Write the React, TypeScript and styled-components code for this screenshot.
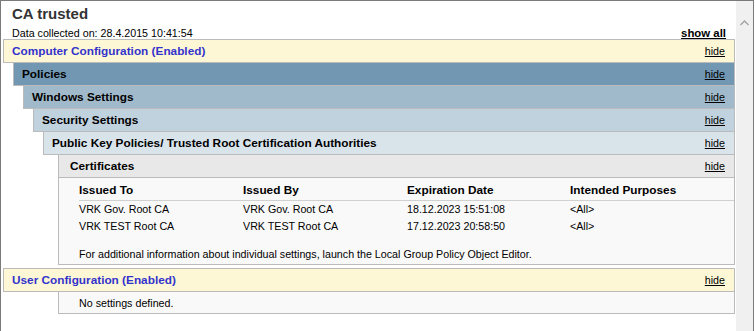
import styled, { createGlobalStyle } from 'styled-components';

const GlobalStyle = createGlobalStyle`
  html, body {
    margin: 0;
    padding: 0;
    background: #ffffff;
    overflow: hidden;
  }
  body {
    font-family: 'Liberation Sans', Arial, sans-serif;
    font-size: 10.7px;
    color: #000000;
  }
`;

const levelColors = ['#fef7d6', '#7197b3', '#a0bacb', '#c0d2de', '#d9e3ea', '#e8e8e8'];
const levelIndent = [2, 12, 22, 32, 42, 57];

const Frame = styled.div`
  display: flex;
  width: 754px;
  height: 340px;
  box-sizing: border-box;
  border: 1px solid #7a7a7a;
  border-bottom: none;
`;

const Content = styled.div`
  flex: 1;
  display: flex;
  flex-direction: column;
  min-width: 0;
`;

const TitleBlock = styled.div`
  padding: 3px 9px 0 11px;
  height: 38px;
  box-sizing: border-box;
`;

const Title = styled.div`
  font-size: 15px;
  font-weight: bold;
  line-height: 20px;
  color: #333333;
`;

const MetaRow = styled.div`
  display: flex;
  justify-content: space-between;
  line-height: 14px;
  margin-top: 2px;
`;

const ShowAll = styled.span`
  font-weight: bold;
  font-size: 11.4px;
  text-decoration: underline;
`;

const Header = styled.div<{ $level: number }>`
  display: flex;
  justify-content: space-between;
  align-items: center;
  height: 24px;
  box-sizing: border-box;
  margin-left: ${(p) => levelIndent[p.$level]}px;
  margin-bottom: -1px;
  padding: 0 9px 1px ${(p) => (p.$level === 5 ? 11 : 8)}px;
  border: 1px solid #bbbbbb;
  background: ${(p) => levelColors[p.$level]};
  font-weight: bold;
  font-size: 11.8px;
  color: ${(p) => (p.$level === 0 ? '#3333cc' : '#000000')};
`;

const Hide = styled.span`
  font-weight: normal;
  font-size: 10.7px;
  color: #000000;
  text-decoration: underline;
`;

const Body = styled.div`
  margin-left: 57px;
  padding: 3px 0 3px 20px;
  border: 1px solid #bbbbbb;
  background: #f9f9f9;
  line-height: 14px;
`;

const Table = styled.div`
  display: grid;
  grid-template-columns: 164px 164px 163px 1fr;
`;

const HeadCell = styled.div`
  font-weight: bold;
  font-size: 11.8px;
  line-height: 18px;
  border-bottom: 1px solid #d0d0d0;
  padding-bottom: 1px;
`;

const Cell = styled.div`
  line-height: 17px;
`;

const Note = styled.div`
  margin-top: 12px;
  line-height: 14px;
`;

const Gap = styled.div`
  height: 3px;
`;

const EmptyBody = styled(Body)`
  padding-top: 4px;
  padding-bottom: 3px;
`;

const Scrollbar = styled.div`
  width: 17px;
  margin-left: 1px;
  background: #f0f0f0;
  display: flex;
  justify-content: center;
  padding-top: 19px;
  box-sizing: border-box;
`;

const certs = [
  { to: 'VRK Gov. Root CA', by: 'VRK Gov. Root CA', exp: '18.12.2023 15:51:08', use: '<All>' },
  { to: 'VRK TEST Root CA', by: 'VRK TEST Root CA', exp: '17.12.2023 20:58:50', use: '<All>' },
];

const levels = [
  'Computer Configuration (Enabled)',
  'Policies',
  'Windows Settings',
  'Security Settings',
  'Public Key Policies/ Trusted Root Certification Authorities',
  'Certificates',
];

export default function App() {
  return (
    <>
      <GlobalStyle />
      <Frame>
        <Content>
          <TitleBlock>
            <Title>CA trusted</Title>
            <MetaRow>
              <span>Data collected on: 28.4.2015 10:41:54</span>
              <ShowAll>show all</ShowAll>
            </MetaRow>
          </TitleBlock>
          {levels.map((label, i) => (
            <Header key={label} $level={i}>
              {label}
              <Hide>hide</Hide>
            </Header>
          ))}
          <Body>
            <Table>
              <HeadCell>Issued To</HeadCell>
              <HeadCell>Issued By</HeadCell>
              <HeadCell>Expiration Date</HeadCell>
              <HeadCell>Intended Purposes</HeadCell>
              {certs.map((c) => (
                <>
                  <Cell key={c.to + 'to'}>{c.to}</Cell>
                  <Cell key={c.to + 'by'}>{c.by}</Cell>
                  <Cell key={c.to + 'exp'}>{c.exp}</Cell>
                  <Cell key={c.to + 'use'}>{c.use}</Cell>
                </>
              ))}
            </Table>
            <Note>
              For additional information about individual settings, launch the Local Group Policy Object Editor.
            </Note>
          </Body>
          <Gap />
          <Header $level={0}>
            User Configuration (Enabled)
            <Hide>hide</Hide>
          </Header>
          <EmptyBody>No settings defined.</EmptyBody>
        </Content>
        <Scrollbar>
          <svg width="9" height="6" viewBox="0 0 9 6">
            <path d="M0.5 5 L4.5 1 L8.5 5" fill="none" stroke="#a3a3a3" strokeWidth="1.3" />
          </svg>
        </Scrollbar>
      </Frame>
    </>
  );
}
